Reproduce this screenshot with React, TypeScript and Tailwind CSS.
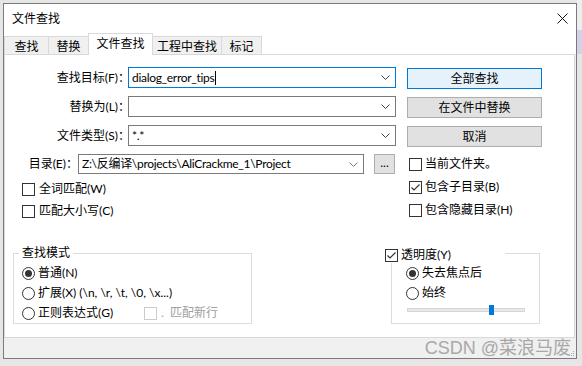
import type { ReactNode } from "react";

function Chevron({ light }: { light?: boolean }) {
  return (
    <svg width="9" height="5" viewBox="0 0 9 5" className="shrink-0">
      <path d="M0.5 0.5L4.5 4.5L8.5 0.5" fill="none" stroke={light ? "#7a7a7a" : "#404040"} strokeWidth="1" />
    </svg>
  );
}

function Combo({ className, value, focused, caret, light }: { className: string; value?: ReactNode; focused?: boolean; caret?: boolean; light?: boolean }) {
  return (
    <div
      className={`flex items-center justify-between border bg-white pl-[3px] pr-[5px] ${
        focused ? "border-[#0078d7]" : "border-[#7a7a7a]"
      } ${className}`}
    >
      <span className="flex items-center whitespace-nowrap leading-[16px] tracking-[-0.3px]">
        {value}
        {caret && <span className="ml-px inline-block h-[14px] w-px bg-black" />}
      </span>
      <Chevron light={light} />
    </div>
  );
}

function Check({ label, checked, disabled, gap = "gap-[3px]" }: { label: ReactNode; checked?: boolean; disabled?: boolean; gap?: string }) {
  return (
    <div className={`flex items-center ${gap}`}>
      <span
        className={`flex h-[13px] w-[13px] shrink-0 items-center justify-center border bg-white ${
          disabled ? "border-[#cccccc]" : "border-[#333333]"
        }`}
      >
        {checked && (
          <svg width="11" height="11" viewBox="0 0 11 11">
            <path d="M1.5 5.5L4 8L9.5 2.5" fill="none" stroke="#333" strokeWidth="1.2" />
          </svg>
        )}
      </span>
      <span className={`whitespace-nowrap leading-[16px] ${disabled ? "text-[#a0a0a0]" : ""}`}>{label}</span>
    </div>
  );
}

function Radio({ label, on }: { label: ReactNode; on?: boolean }) {
  return (
    <div className="flex items-center gap-[3px]">
      <span className="flex h-[13px] w-[13px] shrink-0 items-center justify-center rounded-full border border-[#333333] bg-white">
        {on && <span className="h-[7px] w-[7px] rounded-full bg-[#333333]" />}
      </span>
      <span className="whitespace-nowrap leading-[16px]">{label}</span>
    </div>
  );
}

function Btn({ children, primary }: { children: ReactNode; primary?: boolean }) {
  return (
    <div
      className={`ml-[11px] mt-px flex h-[21px] w-[135px] items-center justify-center border leading-[16px] ${
        primary ? "border-[#0078d7] bg-[#e5f1fb]" : "border-[#adadad] bg-[#e1e1e1]"
      }`}
    >
      {children}
    </div>
  );
}

const TABS = [
  { t: "查找", w: "w-[45px] border-l" },
  { t: "替换", w: "w-[40px]" },
  { t: "文件查找", w: "w-[65px]", on: true },
  { t: "工程中查找", w: "w-[69px]" },
  { t: "标记", w: "w-[40px]" },
];

const ROWS = [
  { label: "查找目标(F)：", value: "dialog_error_tips", focused: true, caret: true, btn: "全部查找", primary: true },
  { label: "替换为(L)：", value: "", btn: "在文件中替换" },
  { label: "文件类型(S)：", value: "*.*", btn: "取消" },
];

export default function App() {
  return (
    <div className="flex h-[366px] w-[582px] overflow-hidden bg-[#e6e6e6] font-['Lato','Noto_Sans_CJK_SC',sans-serif] text-[12px] text-black">
      <div className="relative ml-[3px] mt-[3px] flex h-[356px] w-[574px] shrink-0 flex-col border border-[#7a7a7a] bg-[#f0f0f0]">
        {/* title bar */}
        <div className="flex h-[29px] items-center justify-between bg-white pl-[8px] pr-[8px]">
          <span className="leading-[16px]">文件查找</span>
          <svg width="11" height="11" viewBox="0 0 11 11">
            <path d="M0.5 0.5L10.5 10.5M10.5 0.5L0.5 10.5" stroke="#111" strokeWidth="1" />
          </svg>
        </div>

        {/* tabs */}
        <div className="flex h-[21px] items-end bg-white">
          {TABS.map((tab) =>
            tab.on ? (
              <div
                key={tab.t}
                className={`relative z-10 -mb-px -ml-px flex h-[22px] justify-center border border-b-0 border-[#d9d9d9] bg-white pt-[2px] leading-[16px] ${tab.w}`}
              >
                {tab.t}
              </div>
            ) : (
              <div
                key={tab.t}
                className={`flex h-[18px] justify-center border-r border-t border-[#d9d9d9] bg-[#f0f0f0] pt-[2px] leading-[16px] ${tab.w}`}
              >
                {tab.t}
              </div>
            )
          )}
        </div>

        {/* panel */}
        <div className="flex h-[284px] w-[571px] flex-col border border-[#d9d9d9] bg-white pt-[12px]">
          {ROWS.map((r, i) => (
            <div key={r.label} className={`flex h-[21px] items-start ${i > 0 ? "mt-[8px]" : ""}`}>
              <span className="w-[125px] text-right leading-[21px]">{r.label}</span>
              <Combo className="-ml-[2px] h-[21px] w-[268px]" value={r.value} focused={r.focused} caret={r.caret} />
              <Btn primary={r.primary}>{r.btn}</Btn>
            </div>
          ))}

          <div className="mt-[8px] flex h-[20px] items-center">
            <span className="w-[73px] text-right leading-[20px]">目录(E)：</span>
            <Combo className="h-[20px] w-[286px]" value="Z:\反编译\projects\AliCrackme_1\Project" light />
            <div className="ml-[10px] flex h-[20px] w-[21px] items-center justify-center border border-[#adadad] bg-[#e1e1e1] pb-[3px] leading-[12px]">
              ...
            </div>
            <div className="ml-[14px]">
              <Check label="当前文件夹。" />
            </div>
          </div>

          <div className="mt-[3px] flex h-[20px] items-center">
            <div className="mt-[4px] w-[404px] pl-[17px]">
              <Check label="全词匹配(W)" gap="gap-[4px]" />
            </div>
            <Check label="包含子目录(B)" checked />
          </div>

          <div className="mt-[2px] flex h-[20px] items-center">
            <div className="mt-[4px] w-[404px] pl-[17px]">
              <Check label="匹配大小写(C)" gap="gap-[4px]" />
            </div>
            <div className="mt-[2px]">
              <Check label="包含隐藏目录(H)" />
            </div>
          </div>

          {/* groups */}
          <div className="mt-[34px] flex items-start">
            <div className="relative ml-[8px] h-[71px] w-[239px] border border-[#dcdcdc] pl-[8px] pt-[9px]">
              <span className="absolute left-[5px] top-[-9px] bg-white px-[3px] leading-[16px]">查找模式</span>
              <div className="flex h-[20px] items-center">
                <Radio label="普通(N)" on />
              </div>
              <div className="flex h-[20px] items-center">
                <Radio label="扩展(X) (\n, \r, \t, \0, \x...)" />
              </div>
              <div className="flex h-[20px] items-center">
                <div className="w-[122px]">
                  <Radio label="正则表达式(G)" />
                </div>
                <Check label={<span>.&nbsp;&nbsp;匹配新行</span>} disabled gap="gap-[4px]" />
              </div>
            </div>

            <div className="relative ml-[139px] h-[71px] w-[149px] border border-[#dcdcdc] pl-[14px] pt-[9px]">
              <div className="absolute left-[-7px] top-[-7px] flex h-[16px] w-[120px] items-center bg-white">
                <Check label="透明度(Y)" checked />
              </div>
              <div className="flex h-[20px] items-center">
                <Radio label="失去焦点后" on />
              </div>
              <div className="flex h-[20px] items-center">
                <Radio label="始终" />
              </div>
              <div className="relative ml-px mt-[5px] h-[4px] w-[118px] border border-[#d6d6d6] bg-[#e7eaea]">
                <span className="absolute left-[81px] top-[-4px] h-[10px] w-[5px] bg-[#0078d7]" />
              </div>
            </div>
          </div>
        </div>

        <div className="flex-1 bg-[#f0f0f0]" />

        <span className="pointer-events-none absolute bottom-[-1px] right-[5px] whitespace-nowrap font-['Liberation_Sans','Noto_Sans_CJK_SC',sans-serif] text-[18px] leading-[22px] text-[#a8a8a8]">
          CSDN @菜浪马废
        </span>
        <svg width="6" height="6" viewBox="0 0 6 6" className="absolute bottom-[1px] right-[1px]">
          <rect x="4" y="0" width="1" height="1" fill="#aaa" />
          <rect x="2" y="2" width="1" height="1" fill="#aaa" />
          <rect x="4" y="2" width="1" height="1" fill="#aaa" />
          <rect x="0" y="4" width="1" height="1" fill="#aaa" />
          <rect x="2" y="4" width="1" height="1" fill="#aaa" />
          <rect x="4" y="4" width="1" height="1" fill="#aaa" />
        </svg>
      </div>

      <div className="flex flex-1 flex-col">
        <div className="h-[30px] bg-[#eeeeee]" />
        <div className="h-[24px] bg-[#d2d2ea]" />
        <div className="flex-1 bg-[#e6e6e6]" />
      </div>
    </div>
  );
}
